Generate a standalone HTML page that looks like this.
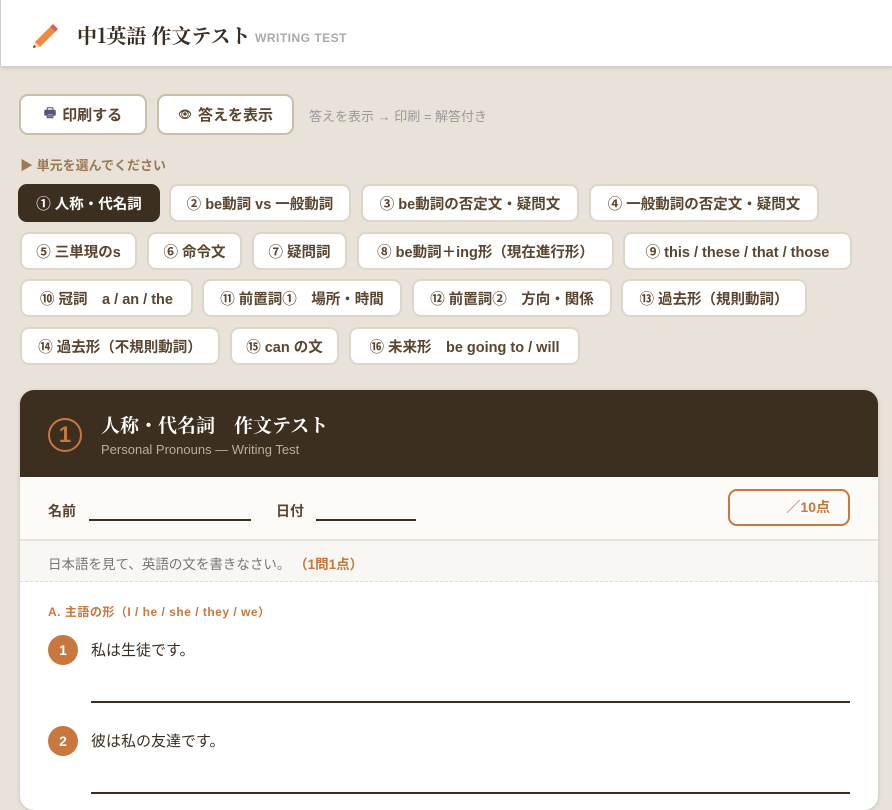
<!DOCTYPE html>
<html><head><meta charset="utf-8"><style>
*{box-sizing:border-box;margin:0;padding:0}
body{width:892px;height:801px;overflow:hidden;background:#e8e2d9;font-family:"Liberation Sans","Noto Sans CJK JP",sans-serif;position:relative;color:#3d2f20}
.top{position:absolute;left:0;top:0;width:892px;height:66px;background:#fff;box-shadow:0 2px 4px rgba(0,0,0,.12);border-left:1px solid #ccc}
.title{position:absolute;left:76px;top:20px;font-family:"Noto Serif CJK SC","Liberation Serif",serif;font-weight:bold;font-size:20px;color:#3a2e22}
.sub{position:absolute;left:254px;top:31px;font-size:12px;font-weight:bold;color:#aaa;letter-spacing:.5px}
.btn{position:absolute;top:94px;height:41px;background:#fff;border:2px solid #c9bea8;border-radius:9px;font-weight:bold;font-size:15px;color:#5a4530;display:flex;align-items:center;justify-content:center;gap:6px}
.hint{position:absolute;left:309px;top:106px;font-size:13px;color:#999}
.sel{position:absolute;left:20px;top:155px;font-size:13px;font-weight:bold;color:#9a7a55}
.chip{position:absolute;height:38px;background:#fff;border:2px solid #ddd5c8;border-radius:9px;font-weight:bold;font-size:14.5px;color:#5a4530;display:flex;align-items:center;justify-content:center;white-space:nowrap}
.chip.on{background:#3d2f20;color:#fff;border-color:#3d2f20}
.card{position:absolute;left:20px;top:390px;width:858px;height:420px;background:#fff;border-radius:14px;overflow:hidden;box-shadow:0 1px 4px rgba(0,0,0,.15)}
.hd{height:87px;background:#3d2f20;position:relative}
.num{position:absolute;left:28px;top:28px;width:34px;height:34px;border:2px solid #c8773f;border-radius:50%;color:#c8773f;font-size:22px;font-weight:bold;text-align:center;line-height:30px}
.ht{position:absolute;left:81px;top:21px;color:#fff;font-size:19px;font-weight:bold;font-family:"Noto Serif CJK SC",serif}
.hs{position:absolute;left:81px;top:52px;color:#b8ada0;font-size:13px}
.info{height:64px;background:#fdfbf7;position:relative;border-bottom:2px solid #e8e2d9}
.lbl{position:absolute;top:24px;font-size:14px;font-weight:bold;color:#5a4530}
.line{position:absolute;top:42px;height:2px;background:#3d2f20}
.score{position:absolute;left:708px;top:12px;width:122px;height:37px;border:2px solid #c8773f;border-radius:9px;color:#c8773f;font-weight:bold;font-size:14px;text-align:right;padding-right:18px;line-height:33px}
.ins{height:41px;background:#f9f7f3;border-bottom:1px dashed #ddd;font-size:13.5px;color:#777;padding:12px 0 0 28px}
.ins b{color:#c8773f}
.sec{position:absolute;left:28px;top:213px;font-size:12px;font-weight:bold;color:#c8773f;letter-spacing:.5px}
.q{position:absolute;left:28px;width:30px;height:30px;border-radius:50%;background:#c8773f;color:#fff;font-weight:bold;font-size:14px;text-align:center;line-height:30px}
.qt{position:absolute;left:71px;font-size:15px;color:#3a2e22}
.ql{position:absolute;left:71px;width:759px;height:2px;background:#3d2f20}
</style></head><body>
<div class="top">
<svg style="position:absolute;left:30px;top:22px" width="28" height="26" viewBox="0 0 28 26"><path d="M4 20 L19 5 L24 10 L9 25 Z" fill="#f08a3c"/><path d="M19 5 L22 2 L27 7 L24 10 Z" fill="#e85a5a"/><path d="M4 20 L9 25 L2 26 Z" fill="#f3d6a6"/><path d="M2 26 L3 23 L5 25Z" fill="#333"/></svg>
<div class="title">中1英語 作文テスト</div><div class="sub">WRITING TEST</div></div>
<div class="btn" style="left:19px;width:128px"><span style="color:#5d4e7a;font-size:13px">🖶</span>印刷する</div>
<div class="btn" style="left:157px;width:137px"><span style="font-size:11px">👁</span>答えを表示</div>
<div class="hint">答えを表示 → 印刷 = 解答付き</div>
<div class="sel">▶ 単元を選んでください</div>
<div class="chip on" style="left:18px;top:184px;width:142px">① 人称・代名詞</div>
<div class="chip" style="left:169px;top:184px;width:182px">② be動詞 vs 一般動詞</div>
<div class="chip" style="left:361px;top:184px;width:218px">③ be動詞の否定文・疑問文</div>
<div class="chip" style="left:589px;top:184px;width:230px">④ 一般動詞の否定文・疑問文</div>
<div class="chip" style="left:20px;top:232px;width:117px">⑤ 三単現のs</div>
<div class="chip" style="left:147px;top:232px;width:95px">⑥ 命令文</div>
<div class="chip" style="left:252px;top:232px;width:95px">⑦ 疑問詞</div>
<div class="chip" style="left:357px;top:232px;width:257px">⑧ be動詞＋ing形（現在進行形）</div>
<div class="chip" style="left:623px;top:232px;width:229px">⑨ this / these / that / those</div>
<div class="chip" style="left:20px;top:279px;width:173px">⑩ 冠詞　a / an / the</div>
<div class="chip" style="left:202px;top:279px;width:200px">⑪ 前置詞①　場所・時間</div>
<div class="chip" style="left:412px;top:279px;width:200px">⑫ 前置詞②　方向・関係</div>
<div class="chip" style="left:621px;top:279px;width:186px">⑬ 過去形（規則動詞）</div>
<div class="chip" style="left:20px;top:327px;width:200px">⑭ 過去形（不規則動詞）</div>
<div class="chip" style="left:230px;top:327px;width:109px">⑮ can の文</div>
<div class="chip" style="left:349px;top:327px;width:231px">⑯ 未来形　be going to / will</div>
<div class="card">
<div class="hd"><div class="num">1</div><div class="ht">人称・代名詞　作文テスト</div><div class="hs">Personal Pronouns — Writing Test</div></div>
<div class="info"><div class="lbl" style="left:28px">名前</div><div class="line" style="left:69px;width:162px"></div><div class="lbl" style="left:256px">日付</div><div class="line" style="left:296px;width:100px"></div><div class="score">／10点</div></div>
<div class="ins">日本語を見て、英語の文を書きなさい。 <b>（1問1点）</b></div>
<div class="sec">A. 主語の形（I / he / she / they / we）</div>
<div class="q" style="top:245px">1</div><div class="qt" style="top:249px">私は生徒です。</div><div class="ql" style="top:311px"></div>
<div class="q" style="top:336px">2</div><div class="qt" style="top:340px">彼は私の友達です。</div><div class="ql" style="top:402px"></div>
</div>
</body></html>
